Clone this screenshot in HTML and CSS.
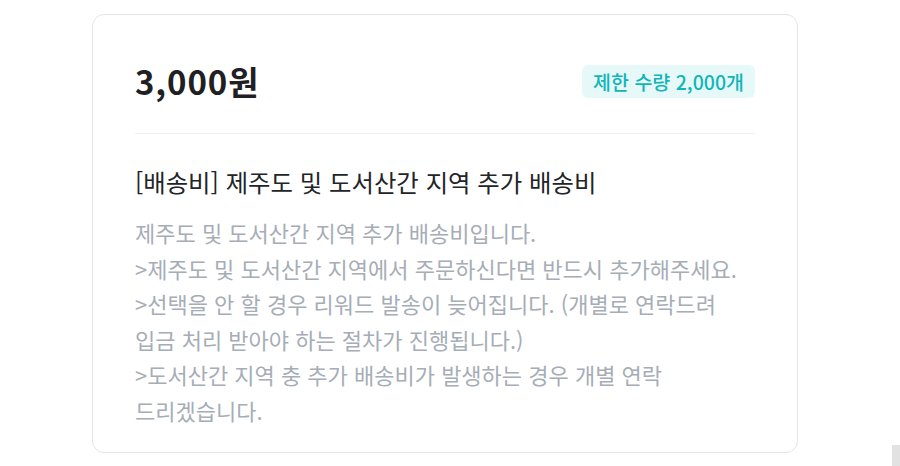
FILE: index.html
```html
<!DOCTYPE html>
<html lang="ko">
<head>
<meta charset="utf-8">
<link rel="stylesheet" href="styles.css">
</head>
<body>
<div class="card">
  <div class="head">
    <div class="price">3,000원</div>
    <div class="badge">제한 수량 2,000개</div>
  </div>
  <div class="divider"></div>
  <div class="title">[배송비] 제주도 및 도서산간 지역 추가 배송비</div>
  <div class="desc">제주도 및 도서산간 지역 추가 배송비입니다.<br>&gt;제주도 및 도서산간 지역에서 주문하신다면 반드시 추가해주세요.<br>&gt;선택을 안 할 경우 리워드 발송이 늦어집니다. (개별로 연락드려 입금 처리 받아야 하는 절차가 진행됩니다.)<br>&gt;도서산간 지역 충 추가 배송비가 발생하는 경우 개별 연락 드리겠습니다.</div>
</div>
<div class="thumb"></div>
</body>
</html>
```
FILE: styles.css
```css
html, body {
  margin: 0;
  padding: 0;
  background: #ffffff;
}
body {
  font-family: "Noto Sans CJK KR", "Noto Sans", sans-serif;
  width: 900px;
  height: 466px;
  overflow: hidden;
  position: relative;
}
.card {
  box-sizing: border-box;
  width: 706px;
  margin: 14px 0 0 92px;
  border: 1px solid #e3e5e8;
  border-radius: 12px;
  padding: 33px 42px 24px 42px;
}
.head {
  height: 66px;
  display: flex;
  align-items: center;
  justify-content: space-between;
}
.price {
  font-size: 33px;
  font-weight: 700;
  color: #1e2023;
  letter-spacing: 0.9px;
}
.badge {
  height: 33px;
  box-sizing: border-box;
  padding: 0 11px;
  display: flex;
  align-items: center;
  background: #e6f8f8;
  color: #10b5b8;
  border-radius: 6px;
  font-size: 19.5px;
  font-weight: 500;
}
.divider {
  height: 1px;
  background: #eef0f2;
  margin-top: 19px;
}
.title {
  margin-top: 30px;
  font-size: 24.4px;
  line-height: 36px;
  color: #222427;
}
.desc {
  margin-top: 15px;
  font-size: 22px;
  line-height: 35.5px;
  color: #a6adb6;
  word-break: keep-all;
}
.thumb {
  position: absolute;
  right: 0;
  top: 445px;
  width: 8px;
  height: 21px;
  background: #e2e2e2;
}
```
